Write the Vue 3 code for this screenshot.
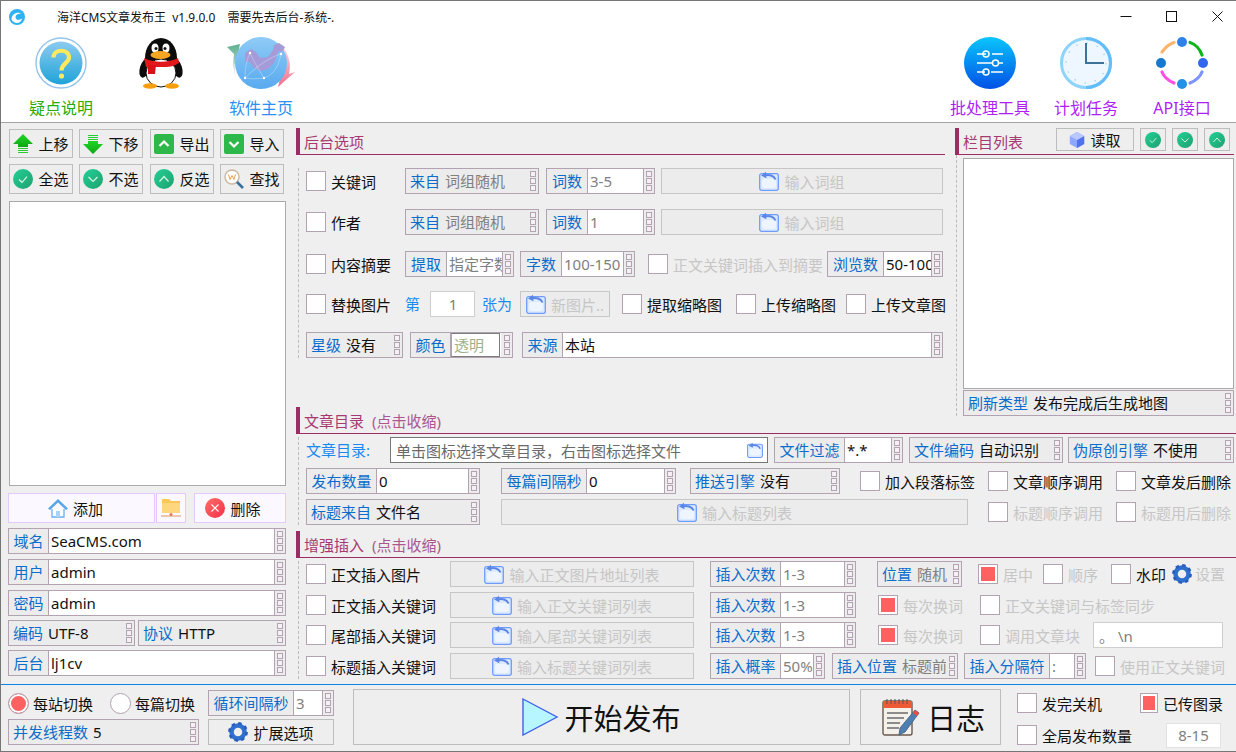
<template>
  <div class="win">
    <!-- 图标定义 -->
    <svg class="defs" aria-hidden="true">
      <defs>
        <linearGradient id="gHelp" x1="0" y1="0" x2="0" y2="1"><stop offset="0" stop-color="#8ccbef"/><stop offset="1" stop-color="#1fa3d8"/></linearGradient>
        <linearGradient id="gGlobe" x1="0" y1="0" x2="0" y2="1"><stop offset="0" stop-color="#8fcbf6"/><stop offset="1" stop-color="#58aaf0"/></linearGradient>
        <linearGradient id="gBlue" x1="0" y1="0" x2="0" y2="1"><stop offset="0" stop-color="#0ac6fc"/><stop offset="1" stop-color="#0050e6"/></linearGradient>
        <linearGradient id="gTeal" x1="0" y1="0" x2="1" y2="1"><stop offset="0" stop-color="#22d195"/><stop offset="1" stop-color="#20a070"/></linearGradient>
        <linearGradient id="gRed" x1="0" y1="0" x2="1" y2="1"><stop offset="0" stop-color="#ff7068"/><stop offset="1" stop-color="#f42f4a"/></linearGradient>
        <linearGradient id="gGreen" x1="0" y1="0" x2="0" y2="1"><stop offset="0" stop-color="#1fd626"/><stop offset="1" stop-color="#0ea716"/></linearGradient>
        <linearGradient id="gLeaf" x1="0" y1="0" x2="0" y2="1"><stop offset="0" stop-color="#5fb090"/><stop offset="1" stop-color="#e6f4ee"/></linearGradient>
        <linearGradient id="gPink" x1="0" y1="0" x2="0" y2="1"><stop offset="0" stop-color="#fbe3ea"/><stop offset="1" stop-color="#ec6f8c"/></linearGradient>
      </defs>
      <symbol id="teal-check" viewBox="0 0 20 20"><circle cx="10" cy="10" r="10" fill="url(#gTeal)"/><path d="M6 10.500l3 2.800 5-5.600" fill="none" stroke="#d8f5e8" stroke-width="1.200"/></symbol>
      <symbol id="teal-down" viewBox="0 0 20 20"><circle cx="10" cy="10" r="10" fill="url(#gTeal)"/><path d="M5.500 8l4.500 4.500L14.500 8" fill="none" stroke="#d8f5e8" stroke-width="1.200"/></symbol>
      <symbol id="teal-up" viewBox="0 0 20 20"><circle cx="10" cy="10" r="10" fill="url(#gTeal)"/><path d="M5.500 12.500L10 7.500l4.500 5" fill="none" stroke="#d8f5e8" stroke-width="1.200"/></symbol>
      <symbol id="open" viewBox="0 0 20 20">
        <rect x="0.700" y="2.700" width="18.600" height="16.600" rx="2" fill="#dbeafe" stroke="#6f9bff" stroke-width="1.300"/>
        <rect x="3" y="8" width="14" height="9" rx="3" fill="#eef5ff"/>
        <path d="M16.500 8.500C15 4.500 10 3 5.500 4.500" fill="none" stroke="#5b86e8" stroke-width="2"/>
        <path d="M7 0.800L2 4.600l5.400 2.600z" fill="#5b86e8"/>
      </symbol>
      <symbol id="gear" viewBox="0 0 20 20">
        <circle cx="10" cy="10" r="6.500" fill="none" stroke="#2f6fd0" stroke-width="4.500"/>
        <circle cx="10" cy="10" r="8.600" fill="none" stroke="#2a5cb8" stroke-width="2.600" stroke-dasharray="3.400 3.350"/>
      </symbol>
    </svg>

    <div class="titlebar">
      <svg class="logo" viewBox="0 0 16 16">
        <circle cx="8" cy="8" r="8" fill="#2fb2f4"/>
        <path d="M2.500 9.500C3 4.500 9 2 12.500 5c-3-1-6 .5-6 3.200 0 2.600 3.600 3.600 6.800 1.300C12 14 7.500 15 4.800 13 3.300 12.200 2.500 11 2.500 9.500z" fill="#fff"/>
      </svg>
      <span class="title">海洋CMS文章发布王 v1.9.0.0</span>
      <span class="title title-tip">需要先去后台-系统-.</span>
      <div class="win-ctrl">
        <svg viewBox="0 0 46 31"><path d="M22.500 15.500h11" stroke="#111" fill="none"/></svg>
        <svg viewBox="0 0 46 31"><rect x="22.500" y="10.500" width="10" height="10" stroke="#111" fill="none"/></svg>
        <svg viewBox="0 0 46 31"><path d="M22.500 10.500l10 10m0-10l-10 10" stroke="#111" fill="none"/></svg>
      </div>
    </div>

    <div class="toolbar">
      <div class="tool-group">
        <div class="tool tool-wide">
          <svg class="tool-ic" viewBox="0 0 52 52">
            <circle cx="26" cy="26" r="25" fill="#fff" stroke="#93c4ec" stroke-width="1.400"/>
            <circle cx="26" cy="26" r="21.500" fill="url(#gHelp)"/>
            <path d="M18.500 20.500c0-9 15.500-9 15.500 0 0 5.500-7.500 6-7.500 13" fill="none" stroke="#ffe95c" stroke-width="4.200"/>
            <circle cx="26.500" cy="39" r="2.600" fill="#ffe95c"/>
          </svg>
          <span class="tool-txt c-green">疑点说明</span>
        </div>
        <div class="tool tool-wide">
          <svg class="tool-ic" viewBox="0 0 52 52">
            <ellipse cx="10" cy="31" rx="5" ry="10" transform="rotate(18 10 31)" fill="#0c0c0c"/>
            <ellipse cx="42" cy="31" rx="5" ry="10" transform="rotate(-18 42 31)" fill="#0c0c0c"/>
            <ellipse cx="26" cy="21" rx="16" ry="20" fill="#0c0c0c"/>
            <ellipse cx="26" cy="36" rx="15" ry="14" fill="#fff" stroke="#0c0c0c"/>
            <ellipse cx="20" cy="11" rx="3.500" ry="4.500" fill="#fff"/><ellipse cx="31" cy="11" rx="3.500" ry="4.500" fill="#fff"/>
            <circle cx="21" cy="11.500" r="1.500" fill="#111"/><circle cx="30" cy="11.500" r="1.500" fill="#111"/>
            <ellipse cx="25.500" cy="18" rx="10" ry="4" fill="#f6a623"/>
            <path d="M9 21c10 5 24 5 34 0l1 5c-5 3-9 4-13 4H11z" fill="#e0171b"/>
            <path d="M13 28h8l-1 9-7 0z" fill="#d4141a"/>
            <ellipse cx="15" cy="49" rx="7" ry="2.800" fill="#f6a010"/><ellipse cx="37" cy="49" rx="7" ry="2.800" fill="#f6a010"/>
          </svg>
        </div>
        <div class="tool tool-wide">
          <svg class="tool-ic tool-ic-globe" viewBox="0 0 70 52">
            <path d="M1 10l13-3-2 10C7 26 7 38 14 49 9 41 6 30 8 17z" fill="url(#gLeaf)"/>
            <path d="M53 6C62 14 66 26 63 37l6-2-17 15 3-12c4-10 3-22-2-32z" fill="url(#gPink)"/>
            <circle cx="35" cy="26" r="26" fill="url(#gGlobe)"/>
            <path d="M19 16l6-4 5 3 4 6 8-1 5-7 1-5 5-2 6 4-2 4-5 1-2 6-3 6-5 5-8 2-7-4-2-4-6-2z" fill="#a59bd8"/>
            <g fill="none" stroke="#e6f3fd" stroke-width=".6" stroke-opacity=".6">
              <path d="M19 41c6 1 13 1 19 0 8-3 14-9 17-24M24 16C20 24 19 33 19 41M24 16c4 9 9 17 14 25M55 17C44 20 31 29 19 41"/>
            </g>
            <g fill="#fff">
              <circle cx="19" cy="41" r="1.200"/><circle cx="38" cy="41" r="1.200"/><circle cx="55" cy="17" r="1.200"/><circle cx="24" cy="16" r="1.200"/>
            </g>
          </svg>
          <span class="tool-txt c-blue">软件主页</span>
        </div>
      </div>
      <div class="tool-group">
        <div class="tool">
          <svg class="tool-ic" viewBox="0 0 52 52">
            <circle cx="26" cy="26" r="26" fill="url(#gBlue)"/>
            <g fill="none" stroke="#fff" stroke-width="1.500">
              <path d="M13 17h9m6 0h11M13 26h16m6 0h4M13 35h8m6 0h12"/>
              <circle cx="22" cy="17" r="3"/><circle cx="31.500" cy="26" r="3"/><circle cx="22" cy="35" r="3"/>
            </g>
          </svg>
          <span class="tool-txt c-purple">批处理工具</span>
        </div>
        <div class="tool">
          <svg class="tool-ic" viewBox="0 0 52 52">
            <circle cx="26" cy="26" r="24.500" fill="#eef7ff" stroke="#8ed3fb" stroke-width="3"/>
            <path d="M26 1.500a24.500 24.500 0 0 1 0 49" fill="none" stroke="#62bdf9" stroke-width="3"/>
            <circle cx="26" cy="26" r="20" fill="none" stroke="#9fd4f5" stroke-width="1.400" stroke-dasharray="1.400 9.070"/>
            <path d="M26 6v20h18" fill="none" stroke="#3f7299" stroke-width="2"/>
          </svg>
          <span class="tool-txt c-purple">计划任务</span>
        </div>
        <div class="tool">
          <svg class="tool-ic" viewBox="0 0 52 52">
            <g fill="none" stroke-width="3.200" stroke-linecap="round">
              <path d="M6 15C9 11 13 7 18 5.500" stroke="#ffb36b"/>
              <path d="M34 5.500C39 7 44 12 46 18" stroke="#0cb51a"/>
              <path d="M6 35c2 5 7 9 12 11" stroke="#ff4fe4"/>
              <path d="M34 46c5-2 10-6 12-11" stroke="#7d93ff"/>
            </g>
            <circle cx="26" cy="5" r="5" fill="#2f83e8"/><circle cx="5" cy="26" r="5" fill="#1679d0"/>
            <circle cx="47" cy="26" r="5" fill="#3167ee"/><circle cx="26" cy="47" r="5" fill="#2490e6"/>
          </svg>
          <span class="tool-txt c-purple">API接口</span>
        </div>
      </div>
    </div>

    <div class="main">
      <aside class="side">
        <div class="side-btns">
          <button class="btn">
            <svg class="ic" viewBox="0 0 20 20"><path d="M10 0l10 10h-5v3H5v-3H0z" fill="url(#gGreen)"/><path d="M5 14.500h10M5 16.500h10M5 18.500h10" stroke="#2ccb32"/></svg>上移
          </button>
          <button class="btn">
            <svg class="ic" viewBox="0 0 20 20"><path d="M10 20L0 10h5V7h10v3h5z" fill="url(#gGreen)"/><path d="M5 1.500h10M5 3.500h10M5 5.500h10" stroke="#2ccb32"/></svg>下移
          </button>
          <button class="btn">
            <svg class="ic" viewBox="0 0 20 20"><rect width="20" height="20" rx="2" fill="#2eb84a"/><path d="M5.500 12L10 7.500l4.500 4.500" fill="none" stroke="#fff" stroke-width="2.200"/></svg>导出
          </button>
          <button class="btn">
            <svg class="ic" viewBox="0 0 20 20"><rect width="20" height="20" rx="2" fill="#2eb84a"/><path d="M5.500 8L10 12.500 14.500 8" fill="none" stroke="#fff" stroke-width="2.200"/></svg>导入
          </button>
          <button class="btn"><svg class="ic"><use href="#teal-check"/></svg>全选</button>
          <button class="btn"><svg class="ic"><use href="#teal-down"/></svg>不选</button>
          <button class="btn"><svg class="ic"><use href="#teal-up"/></svg>反选</button>
          <button class="btn">
            <svg class="ic" viewBox="0 0 20 20">
              <circle cx="8" cy="8" r="7" fill="#fff" stroke="#c9b8a0" stroke-width="1.400"/>
              <path d="M4.500 5.500l1.500 5 2-4 2 4 1.500-5" fill="none" stroke="#e8a050"/>
              <path d="M13 13l6 6" stroke="#3c6f9c" stroke-width="2.600"/>
            </svg>查找
          </button>
        </div>
        <div class="listbox side-list"></div>
        <div class="add-row">
          <button class="btn-soft btn-add">
            <svg class="ic" viewBox="0 0 20 20">
              <path d="M10 1L0 10.500 2 12l8-7.500L18 12l2-1.500z" fill="#5aa5e8"/>
              <path d="M4 11v8h12v-8" fill="#fff" stroke="#6aaef0" stroke-width="1.300"/>
              <rect x="8" y="13" width="4" height="6" fill="#a9d3f5"/>
            </svg>添加
          </button>
          <button class="btn-soft btn-folder">
            <svg class="ic" viewBox="0 0 20 20">
              <path d="M1 1h7l2 2h9v12H1z" fill="#fcc659"/><path d="M1 5h18v10H1z" fill="#fdd67e"/>
              <path d="M10 15v3M0 18h20" stroke="#e8b89a" stroke-width="1.400"/>
              <circle cx="10" cy="16.500" r="1.500" fill="#e87a5a"/>
            </svg>
          </button>
          <button class="btn-soft btn-del">
            <svg class="ic" viewBox="0 0 20 20"><circle cx="10" cy="10" r="10" fill="url(#gRed)"/><path d="M6.500 6.500l7 7m0-7l-7 7" stroke="#fff" stroke-width="1.100"/></svg>删除
          </button>
        </div>
        <div class="side-fields">
          <div class="fld fld-full" v-for="f in hostFields" :key="f.lab">
            <span class="lab lab-40">{{ f.lab }}</span>
            <span class="val">{{ f.val }}</span>
            <i class="spin"><b></b><b></b><b></b></i>
          </div>
          <div class="side-pair">
            <div class="fld sel pair-a"><span class="blue">编码</span><span class="val-sel">UTF-8</span><i class="spin spin-flat"><b></b><b></b><b></b></i></div>
            <div class="fld sel pair-b"><span class="blue">协议</span><span class="val-sel">HTTP</span><i class="spin spin-flat"><b></b><b></b><b></b></i></div>
          </div>
          <div class="fld fld-full">
            <span class="lab lab-40">后台</span>
            <span class="val">lj1cv</span>
            <i class="spin"><b></b><b></b><b></b></i>
          </div>
        </div>
      </aside>

      <div class="work">
        <section v-for="sec in sections" :key="sec.id" class="sec" :class="sec.id">
          <h3 class="sec-head">{{ sec.title }}<em v-if="sec.hint">{{ sec.hint }}</em></h3>
          <div class="sec-body">
            <div v-for="(row, r) in sec.rows" :key="r" class="row" :style="{ marginTop: row.mt + 'px' }">
              <template v-for="(it, i) in row.items" :key="i">
                <div v-if="it.k === 'c'" class="chk" :class="{ dim: it.off }" :style="box(it)">
                  <i class="tick" :class="{ on: it.on }"></i><span>{{ it.text }}</span>
                </div>
                <span v-else-if="it.k === 't'" class="plain" :class="{ dim: it.off }" :style="box(it)">{{ it.text }}</span>
                <span v-else-if="it.k === 'g'" class="gear-wrap" :style="box(it)"><svg class="ic"><use href="#gear"/></svg></span>
                <button v-else-if="it.k === 'b'" class="btn btn-off" :style="box(it)">
                  <svg class="ic"><use href="#open"/></svg>{{ it.text }}
                </button>
                <div v-else-if="it.k === 'i'" class="box-input" :class="{ dark: it.dark, muted: it.muted, center: it.center }" :style="box(it)">
                  <span>{{ it.text }}</span>
                  <svg v-if="it.dark" class="ic ic-folder"><use href="#open"/></svg>
                </div>
                <div v-else-if="it.k === 's'" class="fld sel" :style="box(it)">
                  <span class="blue">{{ it.lab }}</span>
                  <span class="val-sel" :class="{ muted: it.muted }">{{ it.val }}</span>
                  <i class="spin spin-flat"><b></b><b></b><b></b></i>
                </div>
                <div v-else-if="it.k === 'p'" class="fld" :style="box(it)">
                  <span class="lab" :style="{ width: it.lw + 'px' }">{{ it.lab }}</span>
                  <span class="inner">{{ it.val }}</span>
                  <i class="spin spin-flat"><b></b><b></b><b></b></i>
                </div>
                <div v-else class="fld" :style="box(it)">
                  <span class="lab" :style="{ width: it.lw + 'px' }">{{ it.lab }}</span>
                  <span class="val" :class="{ muted: it.muted }">{{ it.val }}</span>
                  <i class="spin"><b></b><b></b><b></b></i>
                </div>
              </template>
            </div>
          </div>
        </section>

        <section class="sec-cols">
          <div class="cols-head">
            <h3 class="sec-head sec-head-cols">栏目列表</h3>
            <div class="cols-tools">
              <button class="btn btn-read">
                <svg class="ic ic-cube" viewBox="0 0 20 20"><path d="M10 0l9 5v10l-9 5-9-5V5z" fill="#8ea8ff"/><path d="M10 10l9-5v10l-9 5z" fill="#4f73ee"/><path d="M10 0l9 5-9 5-9-5z" fill="#b9c9ff"/></svg>读取
              </button>
              <button class="btn btn-mini"><svg class="ic ic-mini"><use href="#teal-check"/></svg></button>
              <button class="btn btn-mini"><svg class="ic ic-mini"><use href="#teal-down"/></svg></button>
              <button class="btn btn-mini"><svg class="ic ic-mini"><use href="#teal-up"/></svg></button>
            </div>
          </div>
          <div class="cols-body">
            <div class="listbox cols-list"></div>
            <div class="fld sel fld-refresh"><span class="blue">刷新类型</span><span class="val-sel">发布完成后生成地图</span><i class="spin spin-flat"><b></b><b></b><b></b></i></div>
          </div>
        </section>
      </div>
    </div>

    <div class="bottom">
      <div class="bot-left">
        <div class="bot-line">
          <div class="chk radio-item"><i class="tick radio on"></i><span>每站切换</span></div>
          <div class="chk radio-item radio-two"><i class="tick radio"></i><span>每篇切换</span></div>
          <div class="fld fld-loop">
            <span class="lab lab-85">循环间隔秒</span>
            <span class="val muted">3</span>
            <i class="spin"><b></b><b></b><b></b></i>
          </div>
        </div>
        <div class="bot-line">
          <div class="fld sel fld-thread"><span class="blue">并发线程数</span><span class="val-sel">5</span><i class="spin spin-flat"><b></b><b></b><b></b></i></div>
          <button class="btn btn-ext"><svg class="ic"><use href="#gear"/></svg>扩展选项</button>
        </div>
      </div>
      <button class="btn btn-start">
        <svg class="ic-play" viewBox="0 0 38 38"><path d="M1 1l34 18L1 37z" fill="#b8f6ff" stroke="#3f63ea" stroke-width="1.400"/></svg>开始发布
      </button>
      <button class="btn btn-log">
        <svg class="ic-note" viewBox="0 0 38 38">
          <rect x="1" y="3" width="29" height="34" rx="2" fill="#f4f1ea" stroke="#6a5a50" stroke-width="1.400"/>
          <rect x="1" y="3" width="29" height="7" fill="#ee5a35"/>
          <path d="M5 1v5M9 1v5M13 1v5M17 1v5M21 1v5M25 1v5" stroke="#555"/>
          <path d="M5 15h21M5 20h17M5 25h13M5 30h12" stroke="#8c8c8c" stroke-width="2"/>
          <path d="M33 12l4 3-14 19-6 3 1-7z" fill="#4f7fb0" stroke="#3a5a80" stroke-width=".8"/>
          <path d="M33 12l4 3-2 3-4-3z" fill="#e8503a"/>
        </svg>日志
      </button>
      <div class="bot-right">
        <div class="bot-check">
          <div class="chk chk-a"><i class="tick"></i><span>发完关机</span></div>
          <div class="chk chk-small"><i class="tick on"></i><span>已传图录</span></div>
        </div>
        <div class="bot-check bot-check-b">
          <div class="chk chk-b"><i class="tick"></i><span>全局发布数量</span></div>
          <div class="box-input muted center input-count"><span>8-15</span></div>
        </div>
      </div>
    </div>
  </div>
</template>

<script setup>
// 单个控件的构造函数，ml 是和前一个控件的间距
const c = (text, w, ml = 0, opt = {}) => ({ k: 'c', text, w, ml, ...opt })
const t = (text, w, ml = 0, off = false) => ({ k: 't', text, w, ml, off })
const b = (text, w, ml = 0) => ({ k: 'b', text, w, ml })
const s = (lab, val, w, ml = 0, muted = false) => ({ k: 's', lab, val, w, ml, muted })
const f = (lab, val, w, lw, ml = 0, muted = false) => ({ k: 'f', lab, val, w, lw, ml, muted })

const box = (it) => ({ width: it.w ? it.w + 'px' : undefined, marginLeft: (it.ml || 0) + 'px' })

const hostFields = [
  { lab: '域名', val: 'SeaCMS.com' },
  { lab: '用户', val: 'admin' },
  { lab: '密码', val: 'admin' }
]

const sections = [
  {
    id: 'sec-a',
    title: '后台选项',
    rows: [
      { mt: 13, items: [c('关键词', 99), s('来自', '词组随机', 134, 0, true), f('词数', '3-5', 109, 41, 7, true), b('输入词组', 282, 6)] },
      { mt: 15, items: [c('作者', 99), s('来自', '词组随机', 134, 0, true), f('词数', '1', 109, 41, 7, true), b('输入词组', 282, 6)] },
      { mt: 16, items: [c('内容摘要', 99), f('提取', '指定字数', 109, 41, 0, true), f('字数', '100-150', 115, 41, 6, true), c('正文关键词插入到摘要', 175, 13, { off: true }), f('浏览数', '50-100', 116, 56, 4)] },
      { mt: 14, items: [c('替换图片', 99), t('第', 15), { k: 'i', text: '1', w: 45, ml: 10, muted: true, center: true }, t('张为', 30, 7), b('新图片..', 90, 8), c('提取缩略图', 100, 12), c('上传缩略图', 99, 14), c('上传文章图', 100, 11)] },
      { mt: 15, items: [s('星级', '没有', 97), { k: 'p', lab: '颜色', val: '透明', w: 103, lw: 40, ml: 7 }, f('来源', '本站', 421, 40, 9)] }
    ]
  },
  {
    id: 'sec-b',
    title: '文章目录',
    hint: '(点击收缩)',
    rows: [
      { mt: 3, items: [t('文章目录:', 84), { k: 'i', text: '单击图标选择文章目录，右击图标选择文件', w: 378, dark: true, muted: true }, f('文件过滤', '*.*', 129, 70, 6), s('文件编码', '自动识别', 154, 6), s('伪原创引擎', '不使用', 166, 5)] },
      { mt: 5, items: [f('发布数量', '0', 174, 70), f('每篇间隔秒', '0', 175, 85, 21), s('推送引擎', '没有', 150, 14), c('加入段落标签', 115, 20), c('文章顺序调用', 115, 13), c('文章发后删除', 115, 13)] },
      { mt: 5, items: [s('标题来自', '文件名', 174), b('输入标题列表', 467, 21), c('标题顺序调用', 115, 20, { off: true }), c('标题用后删除', 115, 13, { off: true })] }
    ]
  },
  {
    id: 'sec-c',
    title: '增强插入',
    hint: '(点击收缩)',
    rows: [
      { mt: 3, items: [c('正文插入图片', 144), b('输入正文图片地址列表', 244), f('插入次数', '1-3', 146, 70, 16, true), s('位置', '随机', 85, 21, true), c('居中', 55, 16, { on: true, off: true }), c('顺序', 55, 10, { off: true }), c('水印', 55, 13), { k: 'g', w: 20, ml: 6 }, t('设置', 32, 3, true)] },
      { mt: 5, items: [c('正文插入关键词', 144), b('输入正文关键词列表', 244), f('插入次数', '1-3', 146, 70, 16, true), c('每次换词', 84, 22, { on: true, off: true }), c('正文关键词与标签同步', 175, 18, { off: true })] },
      { mt: 4, items: [c('尾部插入关键词', 144), b('输入尾部关键词列表', 244), f('插入次数', '1-3', 146, 70, 16, true), c('每次换词', 84, 22, { on: true, off: true }), c('调用文章块', 100, 18, { off: true }), { k: 'i', text: '。 \\n', w: 130, ml: 13, muted: true }] },
      { mt: 5, items: [c('标题插入关键词', 144), b('输入标题关键词列表', 244), f('插入概率', '50%', 115, 70, 16, true), s('插入位置', '标题前', 126, 7, true), f('插入分隔符', ':', 122, 85, 6, true), c('使用正文关键词', 130, 9, { off: true })] }
    ]
  }
]
</script>

<style>
html, body {
  margin: 0;
  background: #efefef;
  overflow: hidden;
}
* {
  box-sizing: border-box;
}
</style>

<style scoped>
.win {
  width: 1236px;
  height: 752px;
  background: #efefef;
  border: 1px solid #767676;
  border-right: none;
  font-family: "Noto Sans", "Noto Sans CJK SC", sans-serif;
  font-size: 15px;
  color: #111;
  overflow: hidden;
  display: flex;
  flex-direction: column;
}
.defs {
  position: absolute;
  width: 0;
  height: 0;
}
button {
  font: inherit;
  color: inherit;
  padding: 0;
}

/* 标题栏 */
.titlebar {
  height: 31px;
  background: #fff;
  display: flex;
  align-items: center;
  padding-left: 8px;
}
.logo {
  width: 16px;
  height: 16px;
}
.title {
  font-size: 12px;
  margin-left: 32px;
  white-space: nowrap;
  word-spacing: 3px;
}
.title-tip {
  margin-left: 12px;
}
.win-ctrl {
  margin-left: auto;
  display: flex;
}
.win-ctrl svg {
  width: 46px;
  height: 31px;
}

/* 顶部工具栏 */
.toolbar {
  height: 91px;
  background: #fff;
  border-bottom: 1px solid #a4a4a4;
  display: flex;
  justify-content: space-between;
  padding: 5px 6px 0 10px;
}
.tool-group {
  display: flex;
}
.tool {
  width: 96px;
  display: flex;
  flex-direction: column;
  align-items: center;
}
.tool-wide {
  width: 100px;
}
.tool-ic {
  width: 52px;
  height: 52px;
}
.tool-ic-globe {
  width: 70px;
}
.tool-txt {
  font-size: 16px;
  line-height: 22px;
  margin-top: 8px;
  white-space: nowrap;
}
.c-green { color: #27ab05; }
.c-blue { color: #2a90f2; }
.c-purple { color: #ad1ff5; }

.main {
  height: 561px;
  display: flex;
}

/* 左侧 */
.side {
  width: 295px;
  padding: 6px 0 0 7px;
}
.side-btns {
  display: grid;
  grid-template-columns: 70px 71px 70px 64px;
  grid-template-rows: 29px 30px;
  row-gap: 6px;
  margin-left: 1px;
}
.side-btns .btn {
  width: 64px;
  line-height: 22px;
}
.btn {
  display: flex;
  align-items: center;
  justify-content: center;
  gap: 5px;
  background: #eee;
  border: 1px solid #bdbdbd;
  white-space: nowrap;
}
.ic {
  width: 20px;
  height: 20px;
  flex: none;
}
.listbox {
  background: #fff;
  border: 1px solid #a9a9a9;
}
.side-list {
  width: 277px;
  height: 285px;
  margin: 7px 0 0 1px;
}
.add-row {
  display: flex;
  height: 30px;
  margin-top: 7px;
}
.btn-soft {
  display: flex;
  align-items: center;
  justify-content: center;
  gap: 5px;
  background: #fbf8ff;
  border: 1px solid #e4c9ff;
}
.btn-add { width: 147px; padding-right: 12px; }
.btn-folder { width: 30px; margin-left: 1px; }
.btn-del { width: 92px; margin-left: 8px; padding-right: 14px; }
.side-fields {
  width: 278px;
  margin-top: 5px;
  display: flex;
  flex-direction: column;
  gap: 5px;
}
.side-pair {
  display: flex;
  gap: 3px;
  margin-top: -1px;
  margin-bottom: -1px;
}
.pair-a { width: 127px; }
.pair-b { width: 148px; }

/* 表单字段 */
.fld {
  height: 26px;
  line-height: 24px;
  display: flex;
  flex: none;
  background: #fff;
  border: 1px solid #b3a2b2;
  white-space: nowrap;
}
.fld-full { width: 278px; }
.lab {
  flex: none;
  background: #ececec;
  border-right: 1px solid #b3a2b2;
  color: #0b6ccb;
  text-align: center;
}
.lab-40 { width: 40px; }
.lab-85 { width: 85px; }
.val {
  flex: 1;
  min-width: 0;
  padding-left: 2px;
  overflow: hidden;
}
.muted { color: #808080; }
.sel {
  background: #ececec;
  padding-left: 4px;
}
.blue { color: #0b6ccb; }
.val-sel {
  flex: 1;
  min-width: 0;
  margin-left: 5px;
  overflow: hidden;
}
.inner {
  width: 49px;
  margin: 0;
  background: #fff;
  border: 1px solid #7c7c7c;
  border-left-color: #b3a2b2;
  color: #9db08a;
  padding-left: 2px;
  line-height: 22px;
  flex: none;
}
.spin {
  flex: none;
  width: 11px;
  background: #ececec;
  border-left: 1px solid #b3a2b2;
  display: flex;
  flex-direction: column;
  align-items: center;
  justify-content: center;
  gap: 1px;
}
.spin-flat {
  border-left: none;
  margin-left: auto;
}
.spin b {
  width: 6px;
  height: 6px;
  border: 1px solid #b3a2b2;
  background: #f4f0f4;
}

/* 分组 */
.work {
  width: 940px;
  display: grid;
  grid-template-columns: 659px 281px;
  grid-template-rows: 284px 124px 153px;
}
.sec {
  min-width: 0;
}
.sec-a { grid-column: 1; grid-row: 1; padding: 5px 10px 0 0; }
.sec-b { grid-column: 1 / 3; grid-row: 2; }
.sec-c { grid-column: 1 / 3; grid-row: 3; }
.sec-head {
  margin: 0;
  height: 27px;
  line-height: 28px;
  font-size: 15px;
  font-weight: 400;
  color: #a63a70;
  border-left: 4px solid #9a2d63;
  border-bottom: 1px solid #9a2d63;
  padding-left: 4px;
  white-space: nowrap;
}
.sec-head em {
  font-style: normal;
  color: #a9588f;
  margin-left: 8px;
}
.sec-body {
  margin-left: 2px;
  border-left: 1px dashed #bcbcbc;
  padding-left: 7px;
}
.row {
  display: flex;
  height: 26px;
  align-items: center;
}

.chk {
  display: flex;
  align-items: center;
  gap: 5px;
  flex: none;
  white-space: nowrap;
}
.chk.dim { color: #c6c6c6; }
.tick {
  width: 20px;
  height: 20px;
  flex: none;
  background: #fff;
  border: 1px solid #b3a2b2;
}
.tick.on {
  background: #ff6161;
  box-shadow: inset 0 0 0 2px #fff;
}
.radio {
  width: 21px;
  height: 21px;
  border-radius: 50%;
}
.plain {
  flex: none;
  color: #1b8af0;
  white-space: nowrap;
  line-height: 24px;
}
.plain.dim { color: #c6c6c6; }
.gear-wrap {
  flex: none;
  display: flex;
}
.btn-off {
  height: 26px;
  color: #c6c6c6;
  background: #ececec;
  border-color: #c6c6c6;
  flex: none;
}
.box-input {
  flex: none;
  height: 26px;
  display: flex;
  align-items: center;
  justify-content: space-between;
  background: #fff;
  border: 1px solid #cfcfcf;
  padding: 0 4px 0 5px;
  white-space: nowrap;
}
.box-input.dark { border-color: #777; color: #6a6a6a; }
.box-input.center { justify-content: center; }
.ic-folder { width: 16px; height: 16px; }

/* 栏目列表 */
.sec-cols {
  grid-column: 2;
  grid-row: 1;
  padding-top: 5px;
}
.cols-head {
  display: flex;
  margin-right: 2px;
  height: 27px;
  border-left: 4px solid #9a2d63;
  border-bottom: 1px solid #9a2d63;
}
.sec-head-cols {
  border: none;
  width: 97px;
  height: 26px;
}
.cols-tools {
  display: flex;
  gap: 6px;
  height: 23px;
}
.btn-read { width: 78px; height: 23px; }
.ic-cube { width: 16px; height: 16px; }
.btn-mini { width: 26px; height: 23px; }
.ic-mini { width: 16px; height: 16px; }
.cols-body {
  margin-left: 1px;
  border-left: 1px dashed #bcbcbc;
  padding: 3px 2px 0 6px;
}
.cols-list {
  height: 231px;
}
.fld-refresh {
  margin-top: 1px;
  background: #ececec;
}

/* 底部 */
.bottom {
  flex: 1;
  border-top: 1px solid #0a84e6;
  display: flex;
  padding: 4px 0 0 7px;
}
.bot-left {
  width: 326px;
  padding-top: 1px;
}
.bot-line {
  display: flex;
  align-items: center;
  height: 26px;
  margin-bottom: 3px;
}
.radio-item { width: 85px; gap: 4px; }
.radio-two { width: 98px; margin-left: 17px; }
.fld-loop { width: 126px; }
.fld-thread { width: 191px; }
.btn-ext { width: 126px; height: 26px; margin-left: 9px; }
.btn-start {
  width: 497px;
  height: 56px;
  margin-left: 19px;
  font-size: 29px;
  gap: 4px;
}
.ic-play { width: 38px; height: 38px; }
.btn-log {
  width: 141px;
  height: 56px;
  margin-left: 10px;
  padding-left: 6px;
  font-size: 29px;
  gap: 7px;
}
.ic-note { width: 38px; height: 38px; }
.bot-right {
  margin-left: 16px;
  padding-top: 3px;
}
.bot-check {
  display: flex;
  align-items: center;
  height: 22px;
}
.bot-check-b {
  margin-top: 8px;
  height: 26px;
}
.chk-a { width: 123px; }
.chk-b { width: 149px; }
.chk-small { gap: 5px; }
.chk-small .tick { width: 18px; height: 20px; }
.input-count {
  width: 55px;
  height: 25px;
  padding: 0;
  border-color: #e2e2e2;
}
</style>
